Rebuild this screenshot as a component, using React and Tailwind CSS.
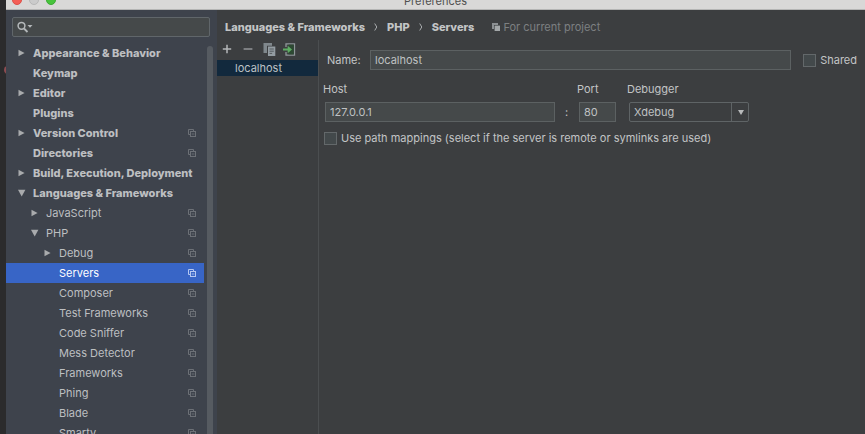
import React from "react";

const TREE = [
  { label: "Appearance & Behavior", level: 0, arrow: "right" },
  { label: "Keymap", level: 0 },
  { label: "Editor", level: 0, arrow: "right" },
  { label: "Plugins", level: 0 },
  { label: "Version Control", level: 0, arrow: "right", project: true },
  { label: "Directories", level: 0, project: true },
  { label: "Build, Execution, Deployment", level: 0, arrow: "right" },
  { label: "Languages & Frameworks", level: 0, arrow: "down" },
  { label: "JavaScript", level: 1, arrow: "right", project: true },
  { label: "PHP", level: 1, arrow: "down", project: true },
  { label: "Debug", level: 2, arrow: "right", project: true },
  { label: "Servers", level: 2, project: true, selected: true },
  { label: "Composer", level: 2, project: true },
  { label: "Test Frameworks", level: 2, project: true },
  { label: "Code Sniffer", level: 2, project: true },
  { label: "Mess Detector", level: 2, project: true },
  { label: "Frameworks", level: 2, project: true },
  { label: "Phing", level: 2, project: true },
  { label: "Blade", level: 2, project: true },
  { label: "Smarty", level: 2, project: true },
];

const INDENT = ["pl-3", "pl-[25px]", "pl-[38px]"];

function Arrow({ direction }) {
  return (
    <svg viewBox="0 0 8 8" className="size-2 shrink-0 fill-[#a9abad]" aria-hidden="true">
      {direction === "right" && <path d="M.5 .8 6.6 4 .5 7.2z" />}
      {direction === "down" && <path d="M0 .8h7.4L3.7 7.4z" />}
    </svg>
  );
}

function ProjectIcon({ className }) {
  return (
    <svg viewBox="0 0 8 8" className={className} fill="none" stroke="currentColor" aria-hidden="true">
      <path d="M2.3 5.5H.5v-5h5v1.8" />
      <rect x="2.5" y="2.5" width="5" height="5" />
      <path d="M4.3 4v2.2M5.8 4v2.2" strokeWidth=".6" />
    </svg>
  );
}

function TreeItem({ item }) {
  const tone = item.selected ? "bg-[#3865c6] text-white" : "text-[#bdbfc1]";
  const weight = item.level === 0 ? "font-extrabold" : "font-normal";
  return (
    <li>
      <button type="button" className={`flex h-5 w-full items-center pr-2 text-left ${INDENT[item.level]} ${tone} ${weight}`}>
        <Arrow direction={item.arrow} />
        <span className="ml-[7px] flex-1 whitespace-nowrap">{item.label}</span>
        {item.project && (
          <ProjectIcon className={`size-2 shrink-0 ${item.selected ? "text-[#b5c8f2]" : "text-[#6c7076]"}`} />
        )}
      </button>
    </li>
  );
}

function Sidebar() {
  return (
    <aside className="flex w-[211px] shrink-0 flex-col overflow-hidden bg-[#3e434c]">
      <div className="pt-[7px] pr-[7px] pl-[6px]">
        <label className="flex h-5 items-center rounded-xs border border-[#60666a] bg-[#45494a] pl-1">
          <svg viewBox="0 0 16 12" className="h-3 w-4 shrink-0" fill="none" stroke="#b4b8ba" aria-hidden="true">
            <circle cx="4.5" cy="4.8" r="3.4" strokeWidth="1.5" />
            <path d="m7 7.5 3.5 3.5" strokeWidth="1.8" />
            <path d="M10.5 4h5L13 6.8z" fill="#b4b8ba" stroke="none" />
          </svg>
          <input type="search" aria-label="Search settings" className="min-w-0 flex-1 bg-transparent px-1 outline-none" />
        </label>
      </div>
      <div className="mt-[6px] flex min-h-0 flex-1">
        <ul className="min-w-0 flex-1">
          {TREE.map((item) => (
            <TreeItem key={item.label} item={item} />
          ))}
        </ul>
        <div className="mt-[3px] mr-1 ml-[3px] w-[6px] rounded-t-full bg-[#565b61]" />
      </div>
    </aside>
  );
}

function Breadcrumbs() {
  return (
    <header className="flex h-[30px] items-center pt-1 pl-2">
      <nav aria-label="Breadcrumb" className="flex items-center gap-[9px] font-extrabold whitespace-nowrap text-[#c3c5c6]">
        <a href="#languages">Languages &amp; Frameworks</a>
        <Chevron />
        <a href="#php">PHP</a>
        <Chevron />
        <a href="#servers">Servers</a>
      </nav>
      <svg viewBox="0 0 8 8" className="ml-[18px] size-2" aria-hidden="true">
        <path d="M0 0h6v6H0z" fill="#8c9093" />
        <path d="M2 2h6v6H2z" fill="#3c3f41" />
        <path d="M2.6 2.6H8V8H2.6z" fill="#a3a7a9" />
      </svg>
      <span className="ml-[3px] whitespace-nowrap text-[#7d8082]">For current project</span>
    </header>
  );
}

function Chevron() {
  return (
    <svg viewBox="0 0 4 8" className="h-2 w-1" fill="none" stroke="#a8abad" aria-hidden="true">
      <path d="M.7.5 2.8 4 .7 7.5" />
    </svg>
  );
}

function ServerList() {
  return (
    <section className="w-[102px] shrink-0 border-r border-[#4b4e50]">
      <div className="flex h-5 items-center pb-[2px] pl-[5px]">
        <button type="button" aria-label="Add">
          <svg viewBox="0 0 10 10" className="size-[10px]" stroke="#b4b7b8" strokeWidth="1.5">
            <path d="M5 .8v8.4M.8 5h8.4" />
          </svg>
        </button>
        <button type="button" aria-label="Remove" className="ml-[11px]">
          <svg viewBox="0 0 10 10" className="size-[10px]" stroke="#929597" strokeWidth="1.5">
            <path d="M.6 5h8.8" />
          </svg>
        </button>
        <button type="button" aria-label="Copy" className="ml-[10px]">
          <svg viewBox="0 0 13 13" className="size-[13px]">
            <path d="M.5 0H9v2.8H4V10H.5z" fill="#7f878c" />
            <path d="M5 3.5h7.3V13H5z" fill="#939ca2" />
            <path d="M6.5 6h4.3M6.5 8.2h4.3M6.5 10.4h2.6" stroke="#555b5f" />
          </svg>
        </button>
        <button type="button" aria-label="Import" className="ml-[7px]">
          <svg viewBox="0 0 13 13" className="size-[13px]" fill="none">
            <path d="M3 4V.9h8.5v11.2H3V9" stroke="#8f979a" strokeWidth="1.3" />
            <path d="M5.5 1.6h5.3v9.8H5.5z" fill="#2d4933" />
            <path d="M0 5.5h4.7V2.8L9 6.5l-4.3 3.7V7.5H0z" fill="#5dac62" />
          </svg>
        </button>
      </div>
      <ul>
        <li>
          <button type="button" className="flex h-4 w-full items-center bg-[#12293d] pl-[18px] text-[#bdc2c6]">
            localhost
          </button>
        </li>
      </ul>
    </section>
  );
}

const FIELD = "h-5 border border-[#5c6162] bg-[#45494a] px-1 text-[#bfc1c2] outline-none";
const CHECK = "size-[13px] shrink-0 appearance-none border border-[#63686a] bg-[#43494b] checked:bg-[#3865c6]";

function ServerForm() {
  return (
    <form className="min-w-0 flex-1 pt-[10px] pr-2 whitespace-nowrap">
      <div className="flex items-center pl-2">
        <label htmlFor="name" className="w-[43px]">Name:</label>
        <input id="name" defaultValue="localhost" className={`${FIELD} min-w-0 flex-1`} />
        <label className="ml-3 flex items-center gap-1">
          <input type="checkbox" className={CHECK} />
          Shared
        </label>
      </div>
      <div className="mt-[11px] flex">
        <div className="flex w-[236px] flex-col pl-1">
          <label htmlFor="host" className="h-[21px] leading-4">Host</label>
          <input id="host" defaultValue="127.0.0.1" className={`${FIELD} ml-[2px]`} />
        </div>
        <span className="mt-[21px] w-[22px] pl-[10px] leading-5">:</span>
        <div className="flex flex-col">
          <label htmlFor="port" className="h-[21px] leading-4">Port</label>
          <input id="port" defaultValue="80" className={`${FIELD} ml-[2px] w-[37px]`} />
        </div>
        <div className="ml-[11px] flex flex-col">
          <label htmlFor="debugger" className="h-[21px] leading-4">Debugger</label>
          <div className="relative ml-[2px] w-[120px]">
            <select
              id="debugger"
              defaultValue="Xdebug"
              className="h-5 w-full appearance-none rounded-xs border border-[#5f6466] bg-transparent px-1 text-[#bfc1c2] outline-none"
            >
              <option>Xdebug</option>
              <option>Zend Debugger</option>
            </select>
            <span className="pointer-events-none absolute inset-y-0 right-0 flex w-[18px] items-center justify-center border-l border-[#5f6466]">
              <svg viewBox="0 0 6 5" className="h-[5px] w-[6px] fill-[#b8babb]" aria-hidden="true">
                <path d="M0 0h6L3 5z" />
              </svg>
            </span>
          </div>
        </div>
      </div>
      <label className="mt-2 flex h-4 items-center gap-1 pl-[5px]">
        <input type="checkbox" className={CHECK} />
        Use path mappings (select if the server is remote or symlinks are used)
      </label>
    </form>
  );
}

export default function App() {
  return (
    <div className="flex h-screen overflow-hidden bg-[#2b2b2c] font-['Inter',sans-serif] text-[11px] leading-4 text-[#c3c5c6]">
      <div className="w-[6px] shrink-0 overflow-hidden pt-[66px]">
        <div className="ml-1 size-2 rounded-full bg-[#8d4b50]" />
      </div>
      <div className="flex min-w-0 flex-1 flex-col">
        <div className="relative flex h-[10px] shrink-0 items-end justify-center border-b border-[#b5b5b4] bg-[#d9d8d7]">
          <div className="absolute bottom-1 left-[6px] flex gap-[7px]">
            <span className="size-[10px] rounded-full border border-[#dc5048] bg-[#f45e56]" />
            <span className="size-[10px] rounded-full border border-[#b8b8b8] bg-[#cbcbcb]" />
            <span className="size-[10px] rounded-full border border-[#3ea935] bg-[#48c43c]" />
          </div>
          <h1 className="text-[#50504f]">Preferences</h1>
        </div>
        <div className="flex min-h-0 flex-1">
          <Sidebar />
          <main className="flex min-w-0 flex-1 flex-col bg-[#3c3e40]">
            <Breadcrumbs />
            <div className="flex min-h-0 flex-1">
              <ServerList />
              <ServerForm />
            </div>
          </main>
        </div>
      </div>
    </div>
  );
}
